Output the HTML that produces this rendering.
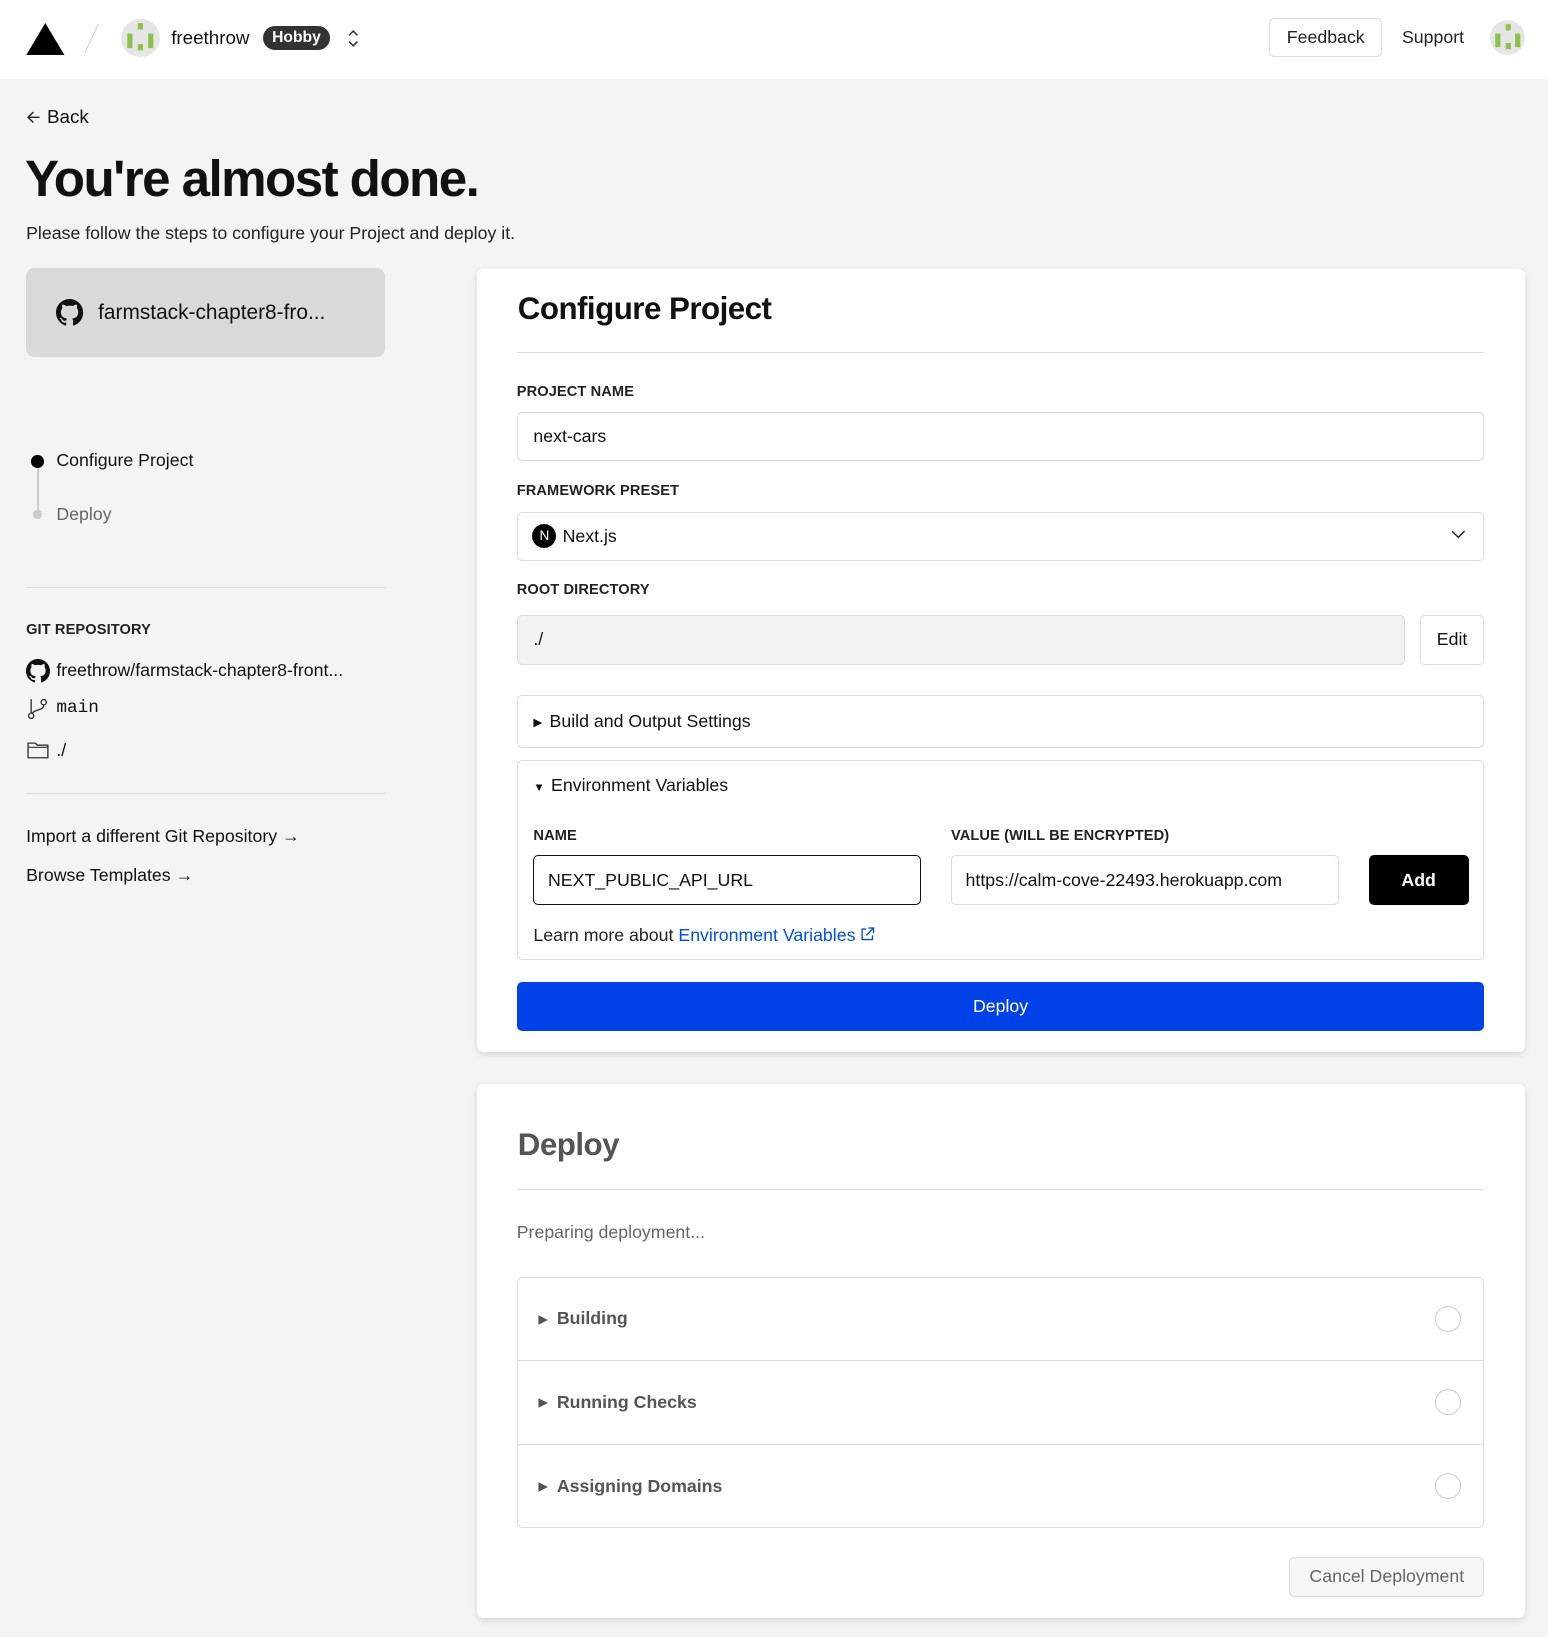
<!DOCTYPE html>
<html><head><meta charset="utf-8"><style>
html{zoom:1.0439}
*{box-sizing:border-box;margin:0;padding:0}
body{width:1483px;height:1568px;background:#f4f4f4;font-family:"Liberation Sans",Arial,sans-serif;color:#111;position:relative;overflow:hidden}
.a{position:absolute}
.hdr{left:0;top:0;width:1483px;height:76px;background:#fff}
.av{border-radius:50%;background:#e6e6e6;overflow:hidden}
.lbl{font-size:14px;font-weight:bold;color:#222;letter-spacing:0.1px}
.inp{background:#fff;border:1px solid #dcdcdc;border-radius:5px;font-size:17px;display:flex;align-items:center;padding-left:15px}
.card{background:#fff;border-radius:6px;box-shadow:0 2px 6px rgba(0,0,0,.12)}
.hr{height:1px;background:#dedede}
.row{display:flex;align-items:center;font-size:17px;font-weight:bold;color:#555;padding-left:20px;border-bottom:1px solid #dedede;height:80px;position:relative}
.circ{position:absolute;right:21px;top:27px;width:25px;height:25px;border-radius:50%;border:1.5px solid #ccc}
</style></head><body>
<div class="a hdr"></div>
<svg class="a" style="left:25px;top:22px" width="37" height="31"><polygon points="18.5,0 37,31 0,31" fill="#000"/></svg>
<div class="a" style="left:87px;top:22px;width:1px;height:30px;background:#ccc;transform:rotate(25deg)"></div>
<div class="a av" style="left:116px;top:18px;width:37px;height:37px"><svg width="37" height="37"><rect x="16" y="4" width="5" height="6" fill="#8bc34a"/><rect x="6" y="14" width="5" height="14" fill="#8bc34a"/><rect x="26" y="14" width="5" height="14" fill="#8bc34a"/><rect x="16" y="24" width="5" height="6" fill="#8bc34a"/></svg></div>
<div class="a" style="left:164px;top:26px;font-size:18px">freethrow</div>
<div class="a" style="left:252px;top:25px;width:64px;height:23px;border-radius:12px;background:#333;color:#fff;font-size:15px;font-weight:bold;text-align:center;line-height:23px">Hobby</div>
<svg class="a" style="left:332px;top:27px" width="12" height="20"><path d="M2 7l4-4 4 4M2 13l4 4 4-4" stroke="#333" stroke-width="1.5" fill="none"/></svg>
<div class="a" style="left:1216px;top:17px;width:108px;height:38px;border:1px solid #dcdcdc;border-radius:5px;font-size:17px;text-align:center;line-height:36px;color:#222">Feedback</div>
<div class="a" style="left:1343px;top:26px;font-size:17px;color:#222">Support</div>
<div class="a av" style="left:1427px;top:19px;width:34px;height:34px"><svg width="34" height="34"><rect x="15" y="4" width="5" height="6" fill="#8bc34a"/><rect x="5" y="13" width="5" height="13" fill="#8bc34a"/><rect x="24" y="13" width="5" height="13" fill="#8bc34a"/><rect x="15" y="22" width="5" height="6" fill="#8bc34a"/></svg></div>

<svg class="a" style="left:25px;top:105px" width="14" height="14"><path d="M13 7H2M7 2L2 7l5 5" stroke="#222" stroke-width="1.4" fill="none"/></svg>
<div class="a" style="left:45px;top:102px;font-size:18px">Back</div>
<div class="a" style="left:24px;top:143px;font-size:49px;font-weight:bold;letter-spacing:-1.5px">You're almost done.</div>
<div class="a" style="left:25px;top:214px;font-size:17px;color:#222">Please follow the steps to configure your Project and deploy it.</div>

<div class="a" style="left:25px;top:257px;width:344px;height:85px;background:#d9d9d9;border-radius:8px"></div>
<svg class="a" style="left:54px;top:286px" width="26" height="26" viewBox="0 0 16 16"><path fill="#111" d="M8 0C3.58 0 0 3.58 0 8c0 3.54 2.29 6.53 5.47 7.59.4.07.55-.17.55-.38v-1.33c-2.23.48-2.7-1.07-2.7-1.07-.36-.92-.89-1.17-.89-1.17-.73-.5.06-.49.06-.49.8.06 1.23.83 1.23.83.71 1.22 1.87.87 2.33.66.07-.52.28-.87.51-1.07-1.78-.2-3.64-.89-3.64-3.95 0-.87.31-1.59.82-2.15-.08-.2-.36-1.02.08-2.12 0 0 .67-.21 2.2.82a7.6 7.6 0 014 0c1.53-1.04 2.2-.82 2.2-.82.44 1.1.16 1.92.08 2.12.51.56.82 1.27.82 2.15 0 3.07-1.87 3.75-3.65 3.95.29.25.54.73.54 1.48v2.2c0 .21.15.46.55.38A8 8 0 0016 8c0-4.42-3.58-8-8-8z"/></svg>
<div class="a" style="left:94px;top:288px;font-size:20px">farmstack-chapter8-fro...</div>

<div class="a" style="left:35px;top:447px;width:2px;height:42px;background:#ccc"></div>
<div class="a" style="left:30px;top:436px;width:12px;height:12px;border-radius:50%;background:#000"></div>
<div class="a" style="left:32px;top:489px;width:8px;height:8px;border-radius:50%;background:#ccc"></div>
<div class="a" style="left:54px;top:431px;font-size:17px">Configure Project</div>
<div class="a" style="left:54px;top:483px;font-size:17px;color:#666">Deploy</div>
<div class="a hr" style="left:25px;top:562px;width:344px"></div>
<div class="a lbl" style="left:25px;top:596px">GIT REPOSITORY</div>
<svg class="a" style="left:25px;top:631px" width="23" height="23" viewBox="0 0 16 16"><path fill="#111" d="M8 0C3.58 0 0 3.58 0 8c0 3.54 2.29 6.530 5.47 7.59.4.07.55-.17.55-.38v-1.33c-2.23.48-2.7-1.07-2.7-1.07-.36-.92-.89-1.17-.89-1.17-.73-.5.06-.49.06-.49.8.06 1.23.83 1.230.83.71 1.22 1.87.87 2.33.66.07-.52.28-.87.51-1.07-1.78-.2-3.64-.89-3.64-3.95 0-.87.31-1.59.82-2.15-.08-.2-.36-1.02.08-2.12 0 0 .67-.21 2.2.82a7.6 7.6 0 014 0c1.53-1.04 2.2-.82 2.2-.82.44 1.1.16 1.92.08 2.12.51.56.82 1.27.82 2.15 0 3.07-1.87 3.75-3.65 3.95.29.25.54.73.54 1.48v2.2c0 .21.15.46.55.38A8 8 0 0016 8c0-4.42-3.58-8-8-8z"/></svg>
<div class="a" style="left:54px;top:632px;font-size:17px">freethrow/farmstack-chapter8-front...</div>
<svg class="a" style="left:26px;top:668px" width="22" height="22"><circle cx="4" cy="18" r="2.5" stroke="#333" fill="none" stroke-width="1.3"/><circle cx="16" cy="5" r="2.5" stroke="#333" fill="none" stroke-width="1.3"/><path d="M4 2v13M16 8c0 5-10 4-11 8" stroke="#333" fill="none" stroke-width="1.3"/></svg>
<div class="a" style="left:54px;top:669px;font-size:17px;font-family:'Liberation Mono',monospace">main</div>
<svg class="a" style="left:26px;top:709px" width="22" height="18"><path d="M1 3h7l2 2h10v12H1z" stroke="#333" fill="none" stroke-width="1.3"/><path d="M1 7h19" stroke="#333" stroke-width="1"/></svg>
<div class="a" style="left:54px;top:709px;font-size:17px">./</div>
<div class="a hr" style="left:25px;top:760px;width:344px"></div>
<div class="a" style="left:25px;top:791px;font-size:17px">Import a different Git Repository →</div>
<div class="a" style="left:25px;top:829px;font-size:17px">Browse Templates →</div>

<div class="a card" style="left:457px;top:258px;width:1004px;height:750px"></div>
<div class="a" style="left:496px;top:279px;font-size:30px;font-weight:bold;letter-spacing:-0.5px">Configure Project</div>
<div class="a hr" style="left:495px;top:337px;width:927px"></div>
<div class="a lbl" style="left:495px;top:368px">PROJECT NAME</div>
<div class="a inp" style="left:495px;top:395px;width:927px;height:47px">next-cars</div>
<div class="a lbl" style="left:495px;top:463px">FRAMEWORK PRESET</div>
<div class="a inp" style="left:495px;top:490px;width:927px;height:47px"><span style="display:inline-block;width:23px;height:23px;border-radius:50%;background:#000;color:#fff;font-size:13px;text-align:center;line-height:23px;margin-left:-1px;margin-right:6px">N</span>Next.js</div>
<svg class="a" style="left:1390px;top:507px" width="14" height="10"><path d="M1 2l6 6 6-6" stroke="#222" stroke-width="1.4" fill="none"/></svg>
<div class="a lbl" style="left:495px;top:558px">ROOT DIRECTORY</div>
<div class="a inp" style="left:495px;top:589px;width:851px;height:48px;background:#f2f2f2">./</div>
<div class="a inp" style="left:1360px;top:589px;width:62px;height:48px;padding:0;justify-content:center">Edit</div>
<div class="a inp" style="left:495px;top:666px;width:927px;height:51px"><span style="font-size:11px;margin-right:7px">▶</span>Build and Output Settings</div>
<div class="a" style="left:495px;top:728px;width:927px;height:192px;border:1px solid #dcdcdc;border-radius:5px;background:#fff"></div>
<div class="a" style="left:511px;top:742px;font-size:17px"><span style="font-size:11px;margin-right:6px">▼</span>Environment Variables</div>
<div class="a lbl" style="left:511px;top:793px">NAME</div>
<div class="a lbl" style="left:911px;top:793px">VALUE (WILL BE ENCRYPTED)</div>
<div class="a inp" style="left:511px;top:819px;width:371px;height:48px;border-color:#111;padding-left:13px">NEXT_PUBLIC_API_URL</div>
<div class="a inp" style="left:911px;top:819px;width:372px;height:48px;padding-left:13px">https://calm-cove-22493.herokuapp.com</div>
<div class="a" style="left:1311px;top:819px;width:96px;height:48px;background:#000;color:#fff;border-radius:5px;font-size:17px;font-weight:bold;text-align:center;line-height:48px">Add</div>
<div class="a" style="left:511px;top:886px;font-size:17px;color:#222">Learn more about <span style="color:#0050e6">Environment Variables</span> <svg width="14" height="14" style="vertical-align:-1px"><path d="M6 2H2v10h10V8M8 1h5v5M13 1L6 8" stroke="#0050e6" stroke-width="1.3" fill="none"/></svg></div>
<div class="a" style="left:495px;top:941px;width:927px;height:47px;background:#0042e8;border-radius:5px;color:#fff;font-size:17px;text-align:center;line-height:47px">Deploy</div>

<div class="a card" style="left:457px;top:1038px;width:1004px;height:512px"></div>
<div class="a" style="left:496px;top:1080px;font-size:30px;font-weight:bold;color:#555;letter-spacing:-0.5px">Deploy</div>
<div class="a hr" style="left:495px;top:1139px;width:927px"></div>
<div class="a" style="left:495px;top:1171px;font-size:17px;color:#666">Preparing deployment...</div>
<div class="a" style="left:495px;top:1223px;width:927px;height:241px;border:1px solid #dcdcdc;border-radius:5px;overflow:hidden">
<div class="row"><span style="font-size:11px;margin-right:9px">▶</span>Building<div class="circ"></div></div>
<div class="row"><span style="font-size:11px;margin-right:9px">▶</span>Running Checks<div class="circ"></div></div>
<div class="row" style="border:0"><span style="font-size:11px;margin-right:9px">▶</span>Assigning Domains<div class="circ"></div></div>
</div>
<div class="a" style="left:1235px;top:1492px;width:187px;height:38px;border:1px solid #dcdcdc;border-radius:5px;background:#f7f7f7;color:#666;font-size:17px;text-align:center;line-height:36px">Cancel Deployment</div>
</body></html>
